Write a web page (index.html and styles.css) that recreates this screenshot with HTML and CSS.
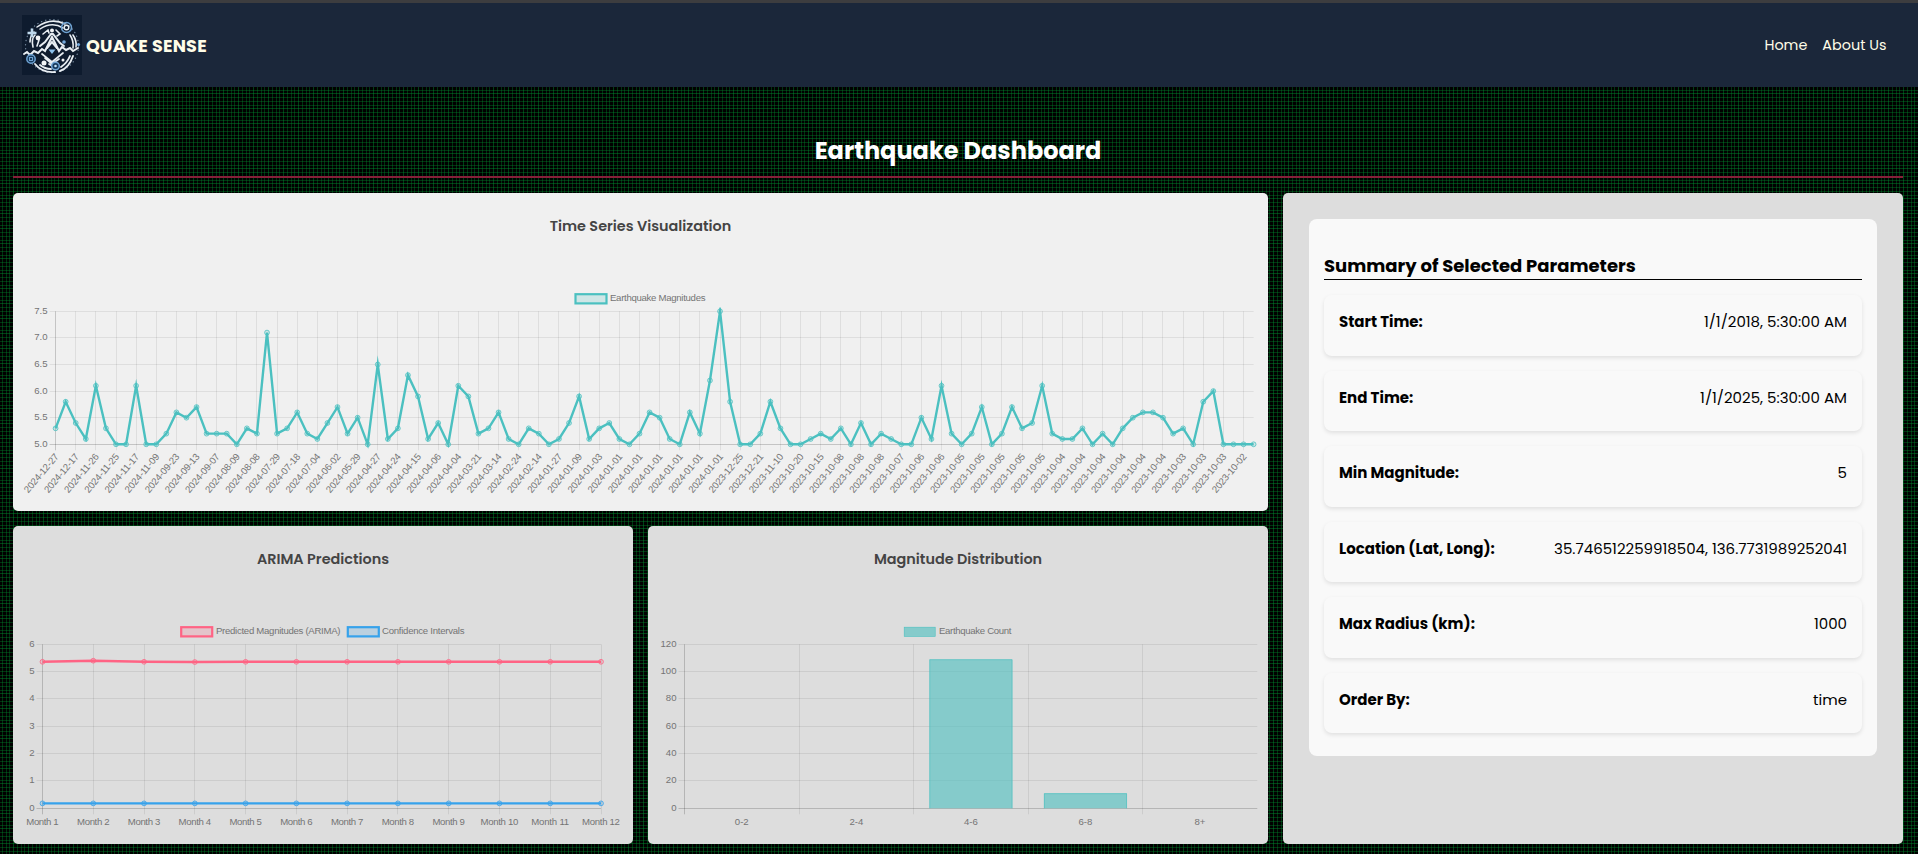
FILE: index.html
```html
<!DOCTYPE html>
<html lang="en">
<head>
<meta charset="utf-8">
<title>Quake Sense</title>
<link rel="stylesheet" href="styles.css">
</head>
<body>
<header class="navbar">
  <a class="brand">
    <svg class="logo" viewBox="0 0 60 60" fill="none">
      <rect width="60" height="60" fill="#0e1b2e"/>
      <g stroke="#e8edf2" stroke-linecap="round">
        <circle cx="30" cy="31" r="26.5" stroke="#73879c" stroke-width="1.3" stroke-dasharray=".2 4"/>
        <path d="M15 12Q29 2 43 9M18 14Q30 6 41 13" stroke-width="1.5"/>
        <path d="M8 27Q8 21 12 17M11 32Q9 24 13 20M15 31L17 25M51 20Q55 26 54 32M48 20Q52 26 51 33" stroke-width="1.6"/>
        <path d="M13 49Q20 58 33 57M18 50Q23 54 29 54M38 56Q47 53 51 41M39 52Q45 48 48 41" stroke-width="1.9"/>
        <path d="M2 39L5 37L8 40L12 36L16 38L20 34L23 36L30 22L37 36L40 32L44 35L48 33L51 36L56 33" stroke-width="2"/>
        <path d="M18 31L23 27L29 19L31 19L38 28L42 31M25 33L30 27L35 33" stroke-width="2"/>
        <path d="M20 39L30 47L41 38M23 43L30 49L37 44M27 49L30 51L34 48" stroke-width="1.7"/>
        <path d="M21 19L26 15L27 18M34 15L38 19L35 21" stroke-width="1.6"/>
      </g>
      <g fill="#f3f5f7"><circle cx="16" cy="23" r="2.4"/><circle cx="30" cy="15.5" r="2"/><circle cx="22" cy="48" r="2.5"/><circle cx="41" cy="45" r="1.5"/></g>
      <path d="M10 13.5V22M5.5 18H14.5" stroke="#bdd7eb" stroke-width="2.6"/>
      <path d="M26.5 34.5L30 39L33.5 34.5Z" fill="#8bc1ed"/>
      <g stroke="#6ea2d2" stroke-width="1.5"><circle cx="44.5" cy="12.5" r="5"/><circle cx="9" cy="44" r="4.2" fill="#16395c"/><circle cx="33.5" cy="51" r="3.8" fill="#16395c"/><rect x="7.5" y="42.5" width="3" height="3" stroke-width="1"/></g>
      <circle cx="44.5" cy="12.5" r="2.3" stroke="#e9f1f7" stroke-width="1.4"/>
      <circle cx="33.5" cy="51" r="1.3" fill="#c4e2f6"/><circle cx="42" cy="27" r="1.8" fill="#75a8da"/><circle cx="56.5" cy="29.5" r="1.6" fill="#75a8da"/>
    </svg>
    <span class="brand-name">QUAKE SENSE</span>
  </a>
  <nav class="nav-links"><a>Home</a><a>About Us</a></nav>
</header>
<main class="page">
  <h1 class="page-title">Earthquake Dashboard</h1>
  <div class="dashboard">
    <section class="card card-wide">
      <h2 class="card-title">Time Series Visualization</h2>
      <svg class="chart" id="series" viewBox="13 273 1255 238">
        <clipPath id="series-area"><rect x="50" y="307.5" width="1210" height="141"/></clipPath>
      </svg>
    </section>
    <section class="card">
      <h2 class="card-title">ARIMA Predictions</h2>
      <svg class="chart" id="arima" viewBox="13 606 620 238"></svg>
    </section>
    <section class="card">
      <h2 class="card-title">Magnitude Distribution</h2>
      <svg class="chart" id="distribution" viewBox="648 606 620 238"></svg>
    </section>
    <aside class="card card-side">
      <div class="summary">
        <h2 class="summary-title">Summary of Selected Parameters</h2>
        <dl class="params">
          <div class="param"><dt>Start Time:</dt><dd>1/1/2018, 5:30:00 AM</dd></div>
          <div class="param"><dt>End Time:</dt><dd>1/1/2025, 5:30:00 AM</dd></div>
          <div class="param"><dt>Min Magnitude:</dt><dd>5</dd></div>
          <div class="param"><dt>Location (Lat, Long):</dt><dd>35.746512259918504, 136.7731989252041</dd></div>
          <div class="param"><dt>Max Radius (km):</dt><dd>1000</dd></div>
          <div class="param"><dt>Order By:</dt><dd>time</dd></div>
        </dl>
      </div>
    </aside>
  </div>
</main>
<script src="charts.js"></script>
</body>
</html>
```
FILE: styles.css
```css
* { box-sizing: border-box; }
body {
  --major: rgba(0, 150, 50, .42);
  --minor: rgba(0, 140, 45, .36);
  margin: 0;
  height: 854px;
  overflow: hidden;
  font-family: Poppins, Inter, "Open Sans", sans-serif;
  background-color: #000;
  background-image:
    linear-gradient(90deg, transparent 2px, var(--minor) 2px, var(--minor) 3px, transparent 3px, transparent 6px, var(--minor) 6px, var(--minor) 7px, transparent 7px, transparent 9px, var(--minor) 9px, var(--minor) 10px, transparent 10px, transparent 13px, var(--major) 13px, var(--major) 14px, transparent 14px),
    linear-gradient(var(--minor) 1px, transparent 1px, transparent 3px, var(--major) 3px, var(--major) 4px, transparent 4px, transparent 7px, var(--minor) 7px, var(--minor) 8px, transparent 8px, transparent 11px, var(--minor) 11px, var(--minor) 12px, transparent 12px);
  background-size: 15px 15px;
}
.navbar {
  height: 87px;
  padding: 0 31.5px 0 22px;
  border-top: 3px solid #3d3d3f;
  background: #1b273a;
  color: #fffde8;
  display: flex;
  align-items: center;
  justify-content: space-between;
}
.brand { display: flex; align-items: center; gap: 4px; }
.logo { width: 60px; height: 60px; }
.brand-name { font-size: 17.6px; font-weight: 700; letter-spacing: .2px; padding-top: 1px; }
.nav-links { display: flex; gap: 15px; font-size: 14.4px; }
.page { padding: 43px 15px 0 13px; }
.page-title {
  height: 48px;
  margin: 0 0 15px;
  border-bottom: 2px solid #862038;
  color: #fff;
  font-size: 24px;
  font-weight: 700;
  line-height: 41px;
  text-align: center;
}
.dashboard {
  display: grid;
  grid-template-columns: 620px 620px 620px;
  grid-template-rows: 318px 318px;
  gap: 15px;
}
.card { background: #ddd; border-radius: 5px; overflow: hidden; }
.card-wide { grid-column: 1 / 3; background: #f0f0f0; }
.card-side { grid-column: 3; grid-row: 1 / 3; padding: 26px; }
.card-title {
  margin: 0;
  height: 80px;
  padding-top: 22px;
  color: #444;
  font-size: 14.4px;
  font-weight: 600;
  line-height: 22px;
  text-align: center;
}
.chart { display: block; width: 100%; height: 238px; font: 9.6px "Liberation Sans", Arial, sans-serif; fill: #747474; }
.chart .series { fill: none; stroke-width: 2.4; stroke-miterlimit: 10; }
.summary { height: 537px; padding: 33px 15px 0; border-radius: 8px; background: #f9f9f9; }
.summary-title {
  height: 28px;
  margin: 0 0 15px;
  border-bottom: 1px solid #000;
  font-size: 18px;
  font-weight: 700;
  line-height: 28px;
}
.params { margin: 0; display: flex; flex-direction: column; gap: 15.1px; }
.param {
  height: 60.5px;
  padding: 15px 15px 0;
  border-radius: 8px;
  box-shadow: 0 2px 4px rgba(0, 0, 0, .1);
  display: flex;
  justify-content: space-between;
  font-size: 15px;
  line-height: 24px;
}
.param dt { font-weight: 700; }
.param dd { margin: 0; }
```
FILE: charts.js
```js
const NS = 'http://www.w3.org/2000/svg';

function add(svg, tag, attrs, text) {
  const el = document.createElementNS(NS, tag);
  for (const k in attrs) el.setAttribute(k, attrs[k]);
  if (text !== undefined) el.textContent = text;
  svg.appendChild(el);
}
const snap = v => Math.floor(v) + 0.5;

function rule(svg, x1, y1, x2, y2, strong) {
  add(svg, 'line', { x1, y1, x2, y2, stroke: '#000', 'stroke-opacity': strong ? 0.18 : 0.075 });
}

function axes(svg, box, yLabels, xCount, xStep) {
  yLabels.forEach((label, i) => {
    const y = box.bottom - (box.bottom - box.top) * i / (yLabels.length - 1);
    rule(svg, box.left - 6, snap(y), box.right, snap(y), i === 0);
    add(svg, 'text', { x: box.left - 8, y: y + 2.4, 'text-anchor': 'end' }, label);
  });
  for (let i = 0; i < xCount; i++) {
    const x = snap(box.left + i * xStep);
    rule(svg, x, box.top, x, box.bottom + 6, i === 0);
  }
}

function line(svg, box, values, min, max, rgb, clip) {
  const step = (box.right - box.left) / (values.length - 1);
  const pts = values.map((v, i) => [box.left + i * step, box.bottom - (v - min) / (max - min) * (box.bottom - box.top)]);
  add(svg, 'polyline', { class: 'series', points: pts.map(p => p.join()).join(' '), stroke: `rgb(${rgb})`, 'clip-path': clip || 'none' });
  pts.forEach(p => add(svg, 'circle', { cx: p[0], cy: p[1], r: 2.4, fill: `rgba(${rgb},.2)`, stroke: `rgb(${rgb})`, 'stroke-width': 0.8 }));
}

function legend(svg, x, y, textX, width, label, rgb, alpha, border) {
  add(svg, 'rect', { x, y, width: 31, height: 9.2, fill: `rgba(${rgb},${alpha})`, stroke: `rgb(${rgb})`, 'stroke-width': border });
  add(svg, 'text', { x: textX, y: y + 7.2, textLength: width }, label);
}

const TEAL = '75,192,192';

const series = document.getElementById('series');
const sBox = { left: 55.6, right: 1253.6, top: 311.3, bottom: 444.3 };
const magnitudes = [
  5.3, 5.8, 5.4, 5.1, 6.1, 5.3, 5, 5, 6.1, 5, 5, 5.2, 5.6, 5.5, 5.7, 5.2, 5.2, 5.2, 5, 5.3,
  5.2, 7.1, 5.2, 5.3, 5.6, 5.2, 5.1, 5.4, 5.7, 5.2, 5.5, 5, 6.5, 5.1, 5.3, 6.3, 5.9, 5.1, 5.4, 5,
  6.1, 5.9, 5.2, 5.3, 5.6, 5.1, 5, 5.3, 5.2, 5, 5.1, 5.4, 5.9, 5.1, 5.3, 5.4, 5.1, 5, 5.2, 5.6,
  5.5, 5.1, 5, 5.6, 5.2, 6.2, 7.5, 5.8, 5, 5, 5.2, 5.8, 5.3, 5, 5, 5.1, 5.2, 5.1, 5.3, 5,
  5.4, 5, 5.2, 5.1, 5, 5, 5.5, 5.1, 6.1, 5.2, 5, 5.2, 5.7, 5, 5.2, 5.7, 5.3, 5.4, 6.1, 5.2,
  5.1, 5.1, 5.3, 5, 5.2, 5, 5.3, 5.5, 5.6, 5.6, 5.5, 5.2, 5.3, 5, 5.8, 6, 5, 5, 5, 5
];
const dates2024 = '12-27 12-17 11-26 11-25 11-17 11-09 09-23 09-13 09-07 08-09 08-08 07-29 07-18 07-04 06-02 05-29 04-27 04-24 04-15 04-06 04-04 03-21 03-14 02-24 02-14 01-27 01-09 01-03 01-01 01-01 01-01 01-01 01-01 01-01';
const dates2023 = '12-25 12-21 11-10 10-20 10-15 10-08 10-08 10-08 10-07 10-06 10-06 10-05 10-05 10-05 10-05 10-05 10-04 10-04 10-04 10-04 10-04 10-04 10-03 10-03 10-03 10-02';
const dates = dates2024.split(' ').map(d => '2024-' + d).concat(dates2023.split(' ').map(d => '2023-' + d));
const dateStep = (sBox.right - sBox.left) / 119 * 2;
axes(series, sBox, ['5.0', '5.5', '6.0', '6.5', '7.0', '7.5'], dates.length, dateStep);
dates.forEach((d, i) => {
  const x = sBox.left + i * dateStep + 1;
  add(series, 'text', { x: 0, y: 3.4, 'text-anchor': 'end', textLength: 48, transform: `translate(${x} 454.6) rotate(-50)` }, d);
});
line(series, sBox, magnitudes, 5, 7.5, TEAL, 'url(#series-area)');
legend(series, 575.5, 294.2, 610, 95.5, 'Earthquake Magnitudes', TEAL, 0.2, 2.2);

const arima = document.getElementById('arima');
const aBox = { left: 42.5, right: 601, top: 644.3, bottom: 808.3 };
const monthStep = (aBox.right - aBox.left) / 11;
axes(arima, aBox, [0, 1, 2, 3, 4, 5, 6], 12, monthStep);
for (let i = 0; i < 12; i++) {
  add(arima, 'text', { x: aBox.left + i * monthStep, y: 825.2, 'text-anchor': 'middle', textLength: i < 9 ? 32.4 : 37.8 }, 'Month ' + (i + 1));
}
line(arima, aBox, [5.36, 5.4, 5.36, 5.35, 5.36, 5.36, 5.36, 5.36, 5.36, 5.36, 5.36, 5.36], 0, 6, '255,99,132');
line(arima, aBox, Array(12).fill(0.18), 0, 6, '54,162,235');
legend(arima, 181.2, 627.2, 216, 124.5, 'Predicted Magnitudes (ARIMA)', '255,99,132', 0.2, 2.2);
legend(arima, 347.8, 627.2, 382, 82.5, 'Confidence Intervals', '54,162,235', 0.2, 2.2);

const dist = document.getElementById('distribution');
const dBox = { left: 684.5, right: 1257.3, top: 644.3, bottom: 808.3 };
const band = (dBox.right - dBox.left) / 5;
axes(dist, dBox, [0, 20, 40, 60, 80, 100, 120], 5, band);
['0-2', '2-4', '4-6', '6-8', '8+'].forEach((label, i) => {
  add(dist, 'text', { x: dBox.left + (i + 0.5) * band, y: 825.2, 'text-anchor': 'middle' }, label);
});
[[2, 109], [3, 11]].forEach(([i, n]) => {
  const h = n / 120 * (dBox.bottom - dBox.top);
  const x = dBox.left + (i + 0.5) * band - 41.5, y = dBox.bottom - h;
  add(dist, 'rect', { x, y, width: 83, height: h, fill: `rgba(${TEAL},.6)` });
  add(dist, 'path', { d: `M${x + 0.4} ${dBox.bottom}V${y + 0.4}H${x + 82.6}V${dBox.bottom}`, fill: 'none', stroke: `rgb(${TEAL})`, 'stroke-width': 0.6 });
});
legend(dist, 904.2, 627.2, 939, 72.5, 'Earthquake Count', TEAL, 0.6, 0.6);
```
